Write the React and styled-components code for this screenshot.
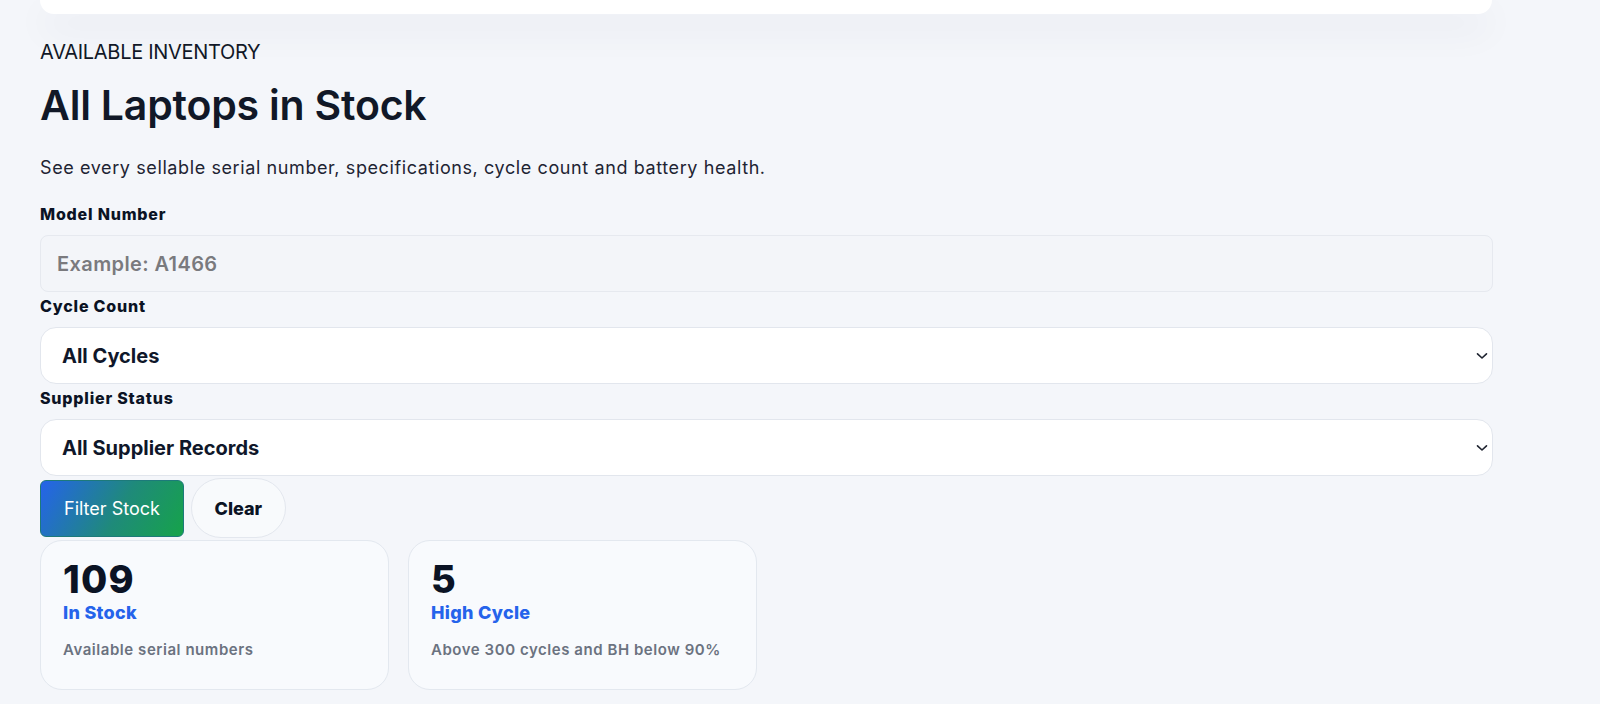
import styled, { createGlobalStyle } from "styled-components";

const GlobalStyle = createGlobalStyle`
  html, body {
    margin: 0;
    padding: 0;
    background: #f4f6fa;
  }
  body {
    font-family: Inter, "Liberation Sans", sans-serif;
    color: #0f172a;
  }
  * { box-sizing: border-box; }
`;

const stats = [
  { value: "109", label: "In Stock", note: "Available serial numbers" },
  { value: "5", label: "High Cycle", note: "Above 300 cycles and BH below 90%" },
];

const Chevron = () => (
  <svg width="12" height="8" viewBox="0 0 12 8" fill="none">
    <path d="M1.5 1.8 L6 6 L10.5 1.8" stroke="#1f2430" strokeWidth="1.6" strokeLinecap="round" strokeLinejoin="round" />
  </svg>
);

const App = () => {
  return (
    <Page>
      <GlobalStyle />
      <Container>
        <TopCard />
        <Eyebrow>AVAILABLE INVENTORY</Eyebrow>
        <Title>All Laptops in Stock</Title>
        <Lead>See every sellable serial number, specifications, cycle count and battery health.</Lead>

        <Form>
          <Field>
            <Label>Model Number</Label>
            <TextInput placeholder="Example: A1466" />
          </Field>
          <Field>
            <Label>Cycle Count</Label>
            <SelectWrap>
              <Select defaultValue="all">
                <option value="all">All Cycles</option>
              </Select>
              <Arrow><Chevron /></Arrow>
            </SelectWrap>
          </Field>
          <Field>
            <Label>Supplier Status</Label>
            <SelectWrap>
              <Select defaultValue="all">
                <option value="all">All Supplier Records</option>
              </Select>
              <Arrow><Chevron /></Arrow>
            </SelectWrap>
          </Field>
          <Actions>
            <PrimaryButton>Filter Stock</PrimaryButton>
            <GhostButton>Clear</GhostButton>
          </Actions>
          <Stats>
            {stats.map((s) => (
              <StatCard key={s.label}>
                <StatValue>{s.value}</StatValue>
                <StatLabel>{s.label}</StatLabel>
                <StatNote>{s.note}</StatNote>
              </StatCard>
            ))}
          </Stats>
        </Form>
      </Container>
    </Page>
  );
};

const Page = styled.div`
  min-height: 100vh;
  background: #f4f6fa;
  overflow: hidden;
`;

const Container = styled.main`
  width: 1453px;
  margin-left: 40px;
  display: flex;
  flex-direction: column;
`;

const TopCard = styled.div`
  height: 14px;
  width: 1452px;
  background: #ffffff;
  border-radius: 0 0 24px 24px;
  box-shadow: 0 16px 36px rgba(30, 41, 80, 0.07);
`;

const Eyebrow = styled.div`
  margin-top: 24px;
  font-size: 20px;
  line-height: 28px;
  font-weight: 400;
  letter-spacing: -0.3px;
  color: #111827;
`;

const Title = styled.h1`
  margin: 14px 0 0;
  font-size: 41px;
  line-height: 50px;
  font-weight: 600;
  letter-spacing: -0.2px;
  color: #111827;
`;

const Lead = styled.p`
  margin: 24px 0 0;
  font-size: 18px;
  line-height: 27px;
  letter-spacing: 0.6px;
  color: #1e2433;
`;

const Form = styled.div`
  margin-top: 21px;
  display: flex;
  flex-direction: column;
  gap: 2px;
`;

const Field = styled.div`
  display: flex;
  flex-direction: column;
  gap: 9px;
`;

const Label = styled.label`
  font-size: 16px;
  line-height: 24px;
  font-weight: 800;
  letter-spacing: 0.8px;
  color: #0b1324;
`;

const TextInput = styled.input`
  height: 57px;
  width: 100%;
  padding: 0 16px;
  border: 1px solid #e6e9ef;
  border-radius: 8px;
  background: #f3f5f9;
  font-family: Inter, "Liberation Sans", sans-serif;
  font-size: 20px;
  font-weight: 600;
  letter-spacing: 0.4px;
  color: #111827;
  outline: none;

  &::placeholder {
    color: #7a7a7e;
  }
`;

const SelectWrap = styled.div`
  position: relative;
`;

const Select = styled.select`
  appearance: none;
  -webkit-appearance: none;
  width: 100%;
  height: 57px;
  padding: 0 40px 0 21px;
  border: 1px solid #e2e6ed;
  border-radius: 16px;
  background: #ffffff;
  font-family: Inter, "Liberation Sans", sans-serif;
  font-size: 20px;
  font-weight: 700;
  color: #0f172a;
  outline: none;
`;

const Arrow = styled.span`
  position: absolute;
  right: 5px;
  top: 50%;
  transform: translateY(-50%);
  display: flex;
  pointer-events: none;
`;

const Actions = styled.div`
  display: flex;
  align-items: center;
  gap: 7px;
`;

const PrimaryButton = styled.button`
  height: 57px;
  padding: 0 23px;
  border: 1px solid #1d7a7a;
  border-radius: 6px;
  background: linear-gradient(120deg, #2563eb 0%, #1f8a7a 55%, #16a34a 100%);
  color: #ffffff;
  font-family: Inter, "Liberation Sans", sans-serif;
  font-size: 18px;
  font-weight: 400;
  cursor: pointer;
`;

const GhostButton = styled.button`
  height: 60px;
  width: 95px;
  border: 1px solid #e3e7ee;
  border-radius: 999px;
  background: #f8fafc;
  color: #0b1324;
  font-family: Inter, "Liberation Sans", sans-serif;
  font-size: 18px;
  font-weight: 800;
  cursor: pointer;
`;

const Stats = styled.div`
  display: flex;
  gap: 19px;
`;

const StatCard = styled.div`
  width: 349px;
  height: 150px;
  padding: 18px 22px;
  border: 1px solid #e3e8ef;
  border-radius: 22px;
  background: #f8fafd;
  display: flex;
  flex-direction: column;
`;

const StatValue = styled.div`
  font-size: 38px;
  line-height: 40px;
  font-weight: 800;
  letter-spacing: 1.2px;
  color: #0b1324;
`;

const StatLabel = styled.div`
  margin-top: 2px;
  font-size: 18px;
  line-height: 24px;
  font-weight: 800;
  letter-spacing: 0.3px;
  color: #2563eb;
`;

const StatNote = styled.div`
  margin-top: 14px;
  font-size: 15px;
  line-height: 22px;
  font-weight: 600;
  letter-spacing: 0.55px;
  color: #6b7280;
`;

export default App;
